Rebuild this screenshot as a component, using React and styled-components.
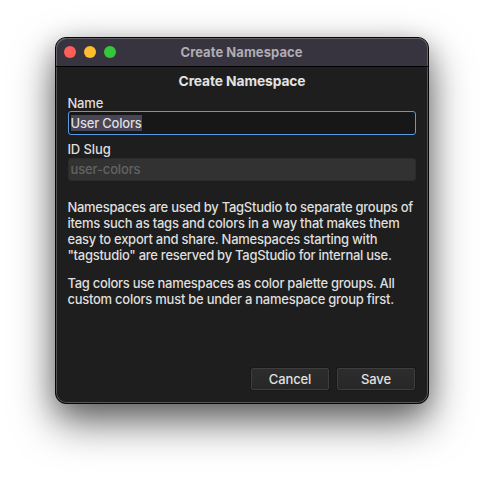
import React from "react";
import styled, { createGlobalStyle } from "styled-components";

const GlobalStyle = createGlobalStyle`
  * { box-sizing: border-box; }
  html, body { margin: 0; background: #fff; overflow: hidden; }
  body { font: 450 13px/16px Inter, "Liberation Sans", sans-serif; color: #dfdfdf; }
`;

const Desktop = styled.main`
  display: flex;
  justify-content: center;
  width: 484px;
  height: 477px;
  padding-top: 37px;
  overflow: hidden;
`;

const Window = styled.section`
  display: flex;
  flex-direction: column;
  width: 374px;
  height: 367px;
  border: 1px solid #060606;
  border-radius: 11px;
  background: #1e1e1e;
  box-shadow:
    inset 0 0 0 1px #555456,
    0 18px 42px rgba(0, 0, 0, 0.58),
    0 6px 24px rgba(0, 0, 0, 0.2);
`;

const TitleBar = styled.header`
  display: grid;
  grid-template-columns: 64px 1fr 64px;
  align-items: center;
  height: 29px;
  flex: none;
  border-bottom: 1px solid #000;
  border-radius: 10px 10px 0 0;
  background: #38343f;
  box-shadow: inset 1px 1px 0 #646169, inset -1px 0 0 #646169;
`;

const Lights = styled.div`
  display: flex;
  gap: 8px;
  padding-left: 8px;
`;

const Light = styled.span`
  width: 12px;
  height: 12px;
  border-radius: 50%;
  background: ${(p) => p.$color};
`;

const WindowTitle = styled.div`
  padding-right: 1px;
  text-align: center;
  font-weight: 700;
  letter-spacing: 0.06px;
  color: #afacb3;
  white-space: nowrap;
`;

const Content = styled.form`
  display: flex;
  flex-direction: column;
  flex: 1;
  margin: 0;
  padding: 6px 12px 13px;
`;

const Heading = styled.h1`
  margin: 0 0 7px;
  text-align: center;
  font-size: 13.8px;
  line-height: 16px;
  font-weight: 700;
  letter-spacing: -0.1px;
  color: #e3e3e3;
`;

const Field = styled.div`
  display: flex;
  flex-direction: column;
  height: 46px;
`;

const Label = styled.label`
  height: 15px;
  margin-left: -0.6px;
  line-height: 15px;
  letter-spacing: ${(p) => p.$tracking ?? "-0.15px"};
`;

const NameBox = styled.div`
  display: flex;
  align-items: center;
  height: 24px;
  padding-left: 2px;
  border: 1px solid #559ce4;
  border-radius: 3px;
  background: #171717;
`;

const Selection = styled.span`
  height: 16px;
  margin-left: -0.5px;
  letter-spacing: -0.2px;
  background: #484656;
`;

const SlugBox = styled(NameBox)`
  height: 23px;
  margin-top: 0.5px;
  padding-left: 1.5px;
  border-color: #2b2b2b;
  background: #323232;
  color: #626262;
  letter-spacing: -0.14px;
`;

const Notes = styled.div`
  display: flex;
  flex-direction: column;
  gap: 12px;
  margin: 11px -6px 0 -0.6px;
`;

const Paragraph = styled.p`
  margin: 0;
`;

const Line = styled.span`
  display: block;
  white-space: nowrap;
  letter-spacing: ${(p) => p.$tracking}px;
`;

const Actions = styled.footer`
  display: flex;
  justify-content: flex-end;
  gap: 8px;
  margin-top: auto;
  padding-right: 1px;
`;

const Button = styled.button`
  width: 78px;
  height: 22px;
  padding: 0;
  border: 1px solid #3e3e3e;
  border-radius: 2px;
  background: linear-gradient(#2d2d2d, #272727);
  box-shadow: 0 0 0 1px #191919;
  font: inherit;
  letter-spacing: -0.12px;
  color: #e0e0e0;
`;

const lightColors = ["#ff5f57", "#febc2e", "#35c73b"];

const paragraphs = [
  [
    ["Namespaces are used by TagStudio to separate groups of", -0.27],
    ["items such as tags and colors in a way that makes them", -0.24],
    ["easy to export and share. Namespaces starting with", -0.26],
    ['"tagstudio" are reserved by TagStudio for internal use.', -0.265],
  ],
  [
    ["Tag colors use namespaces as color palette groups. All", -0.28],
    ["custom colors must be under a namespace group first.", -0.255],
  ],
];

export default function App() {
  return (
    <>
      <GlobalStyle />
      <Desktop>
        <Window>
          <TitleBar>
            <Lights>
              {lightColors.map((color) => (
                <Light key={color} $color={color} />
              ))}
            </Lights>
            <WindowTitle>Create Namespace</WindowTitle>
          </TitleBar>
          <Content>
            <Heading>Create Namespace</Heading>
            <Field>
              <Label>Name</Label>
              <NameBox>
                <Selection>User Colors</Selection>
              </NameBox>
            </Field>
            <Field>
              <Label $tracking="-0.1px">ID Slug</Label>
              <SlugBox>user-colors</SlugBox>
            </Field>
            <Notes>
              {paragraphs.map((lines, i) => (
                <Paragraph key={i}>
                  {lines.map(([text, tracking]) => (
                    <Line key={text} $tracking={tracking}>
                      {text}
                    </Line>
                  ))}
                </Paragraph>
              ))}
            </Notes>
            <Actions>
              <Button type="button">Cancel</Button>
              <Button type="button">Save</Button>
            </Actions>
          </Content>
        </Window>
      </Desktop>
    </>
  );
}
